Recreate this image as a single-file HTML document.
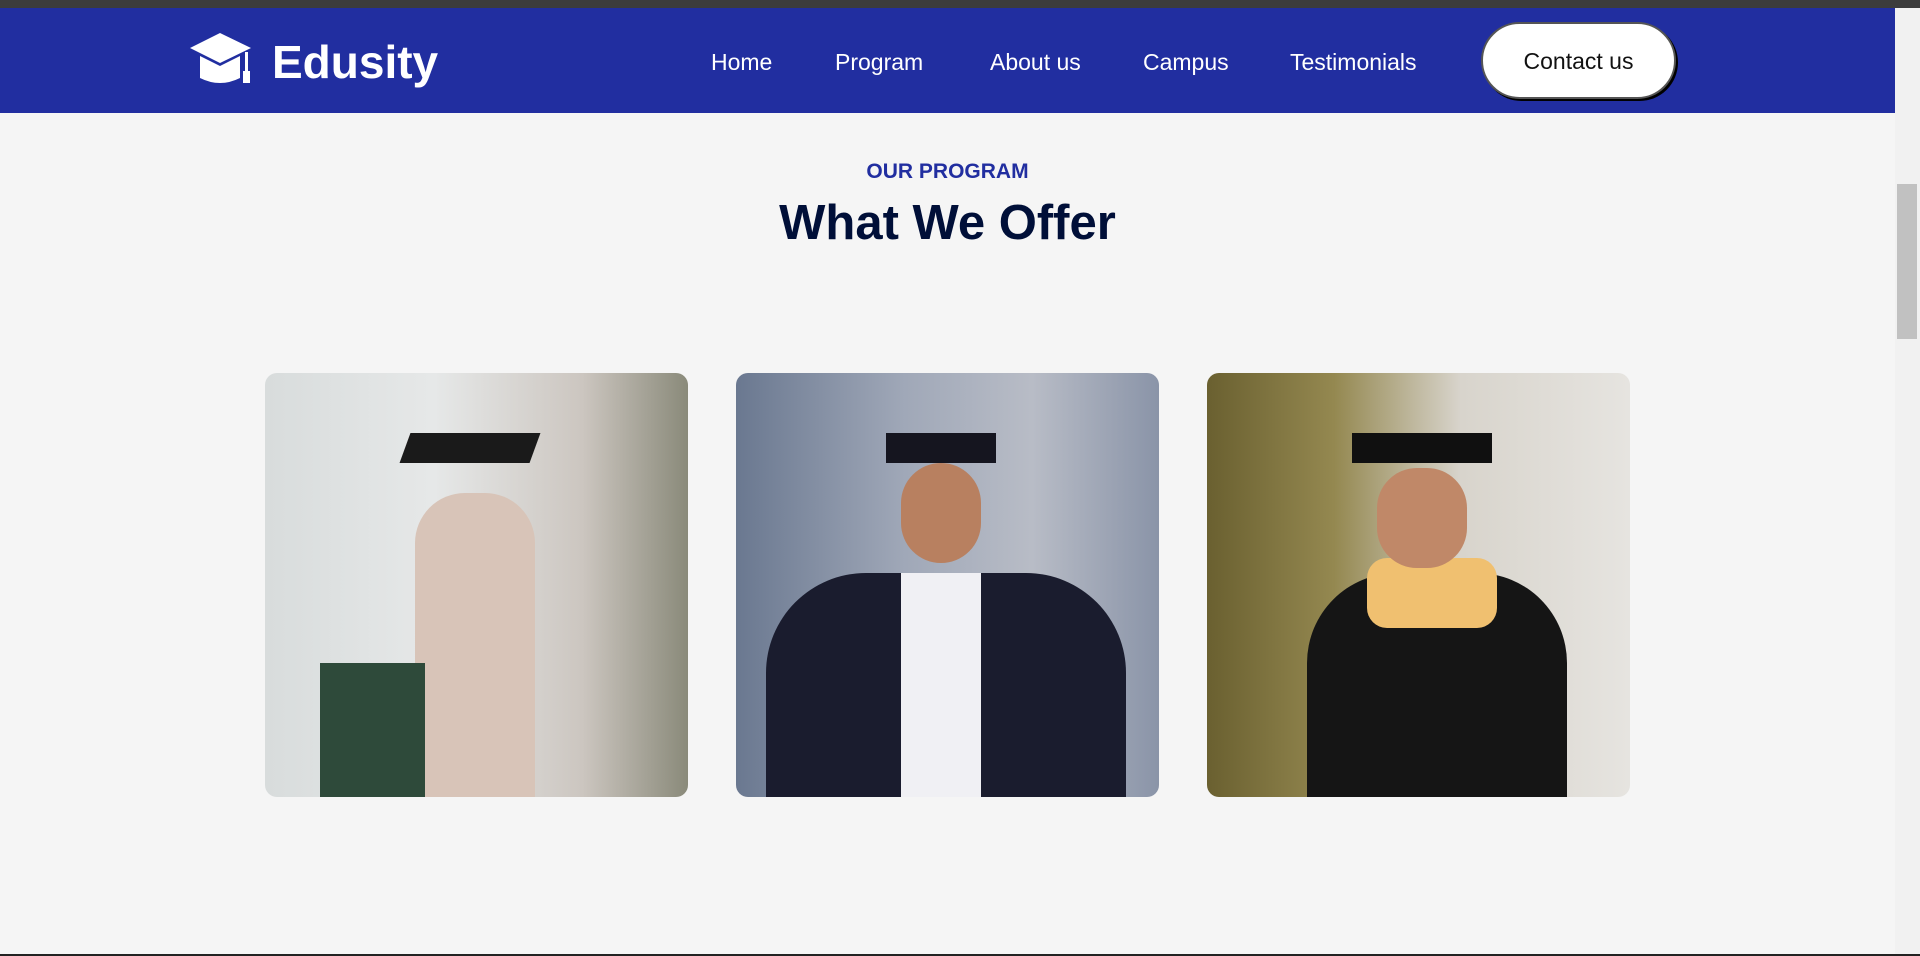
<!DOCTYPE html>
<html><head><meta charset="utf-8"><style>
*{margin:0;padding:0;box-sizing:border-box}
body{width:1920px;height:956px;overflow:hidden;background:#f5f5f5;font-family:"Liberation Sans",sans-serif;position:relative}
.topbar{position:absolute;left:0;top:0;width:1920px;height:8px;background:#3c3c3c}
nav{position:absolute;left:0;top:8px;width:1895px;height:105px;background:#212ea0}
.logo{position:absolute;left:272px;top:27px;color:#fff;font-weight:bold;font-size:46px}
.links a{position:absolute;top:41px;color:#fff;font-size:23px;text-decoration:none}
.btn{position:absolute;left:1481px;top:14px;width:195px;height:77px;background:#fff;border-radius:40px;border:2px solid #555;box-shadow:2px 2px 0 #000;font-size:23px;color:#111;text-align:center;line-height:75px}
.sb{position:absolute;left:1895px;top:8px;width:25px;height:946px;background:#f1f1f1}
.thumb{position:absolute;left:1897px;top:184px;width:20px;height:155px;background:#c1c1c1}
.sub{position:absolute;left:0;width:1895px;text-align:center;top:160px;color:#212ea0;font-weight:bold;font-size:21px}
h2{position:absolute;left:0;width:1895px;text-align:center;top:195px;color:#000f38;font-size:49px;font-weight:bold}
.card{position:absolute;top:373px;width:423px;height:424px;border-radius:12px;overflow:hidden}
.bot{position:absolute;left:0;top:954px;width:1920px;height:2px;background:#222}
</style></head><body>
<div class="topbar"></div>
<nav>
<svg style="position:absolute;left:190px;top:25px" width="62" height="54" viewBox="0 0 62 54">
<path d="M30 0 L61 15 L30 30 L0 15 Z" fill="#fff"/>
<path d="M10 23 L10 45 Q30 55 50 45 L50 23 L30 33 Z" fill="#fff"/>
<rect x="55" y="19" width="3" height="22" fill="#fff"/><rect x="53" y="38" width="7" height="12" fill="#fff"/>
</svg>
<div class="logo">Edusity</div>
<div class="links"><a style="left:711px">Home</a><a style="left:835px">Program</a><a style="left:990px">About us</a><a style="left:1143px">Campus</a><a style="left:1290px">Testimonials</a></div>
<div class="btn">Contact us</div>
</nav>
<div class="sb"></div><div class="thumb"></div>
<div class="sub">OUR PROGRAM</div>
<h2>What We Offer</h2>
<div class="card" style="left:265px;background:linear-gradient(90deg,#d8dcdc 0%,#e6e8e8 40%,#ccc6c0 75%,#8a8a7a 100%)">
<div style="position:absolute;left:150px;top:120px;width:120px;height:304px;background:#d8c4b8;border-radius:50px 50px 0 0"></div>
<div style="position:absolute;left:55px;top:290px;width:105px;height:134px;background:#2e4a3a"></div>
<div style="position:absolute;left:140px;top:60px;width:130px;height:30px;background:#1a1a1a;transform:skewX(-20deg)"></div>
</div>
<div class="card" style="left:736px;background:linear-gradient(90deg,#6a7890 0%,#a0a8b8 40%,#b8bcc6 70%,#8a94a8 100%)">
<div style="position:absolute;left:30px;top:200px;width:360px;height:224px;background:#1a1c2e;border-radius:100px 100px 0 0"></div>
<div style="position:absolute;left:165px;top:200px;width:80px;height:224px;background:#f0f0f4"></div>
<div style="position:absolute;left:165px;top:90px;width:80px;height:100px;background:#b88060;border-radius:40px"></div>
<div style="position:absolute;left:150px;top:60px;width:110px;height:30px;background:#15151f"></div>
</div>
<div class="card" style="left:1207px;background:linear-gradient(90deg,#6a6030 0%,#948850 30%,#d8d4cc 60%,#e6e4e0 100%)">
<div style="position:absolute;left:100px;top:200px;width:260px;height:224px;background:#151515;border-radius:90px 90px 0 0"></div>
<div style="position:absolute;left:160px;top:185px;width:130px;height:70px;background:#f0c070;border-radius:20px"></div>
<div style="position:absolute;left:170px;top:95px;width:90px;height:100px;background:#c08868;border-radius:40px"></div>
<div style="position:absolute;left:145px;top:60px;width:140px;height:30px;background:#101010"></div>
</div>
<div class="bot"></div>
</body></html>
